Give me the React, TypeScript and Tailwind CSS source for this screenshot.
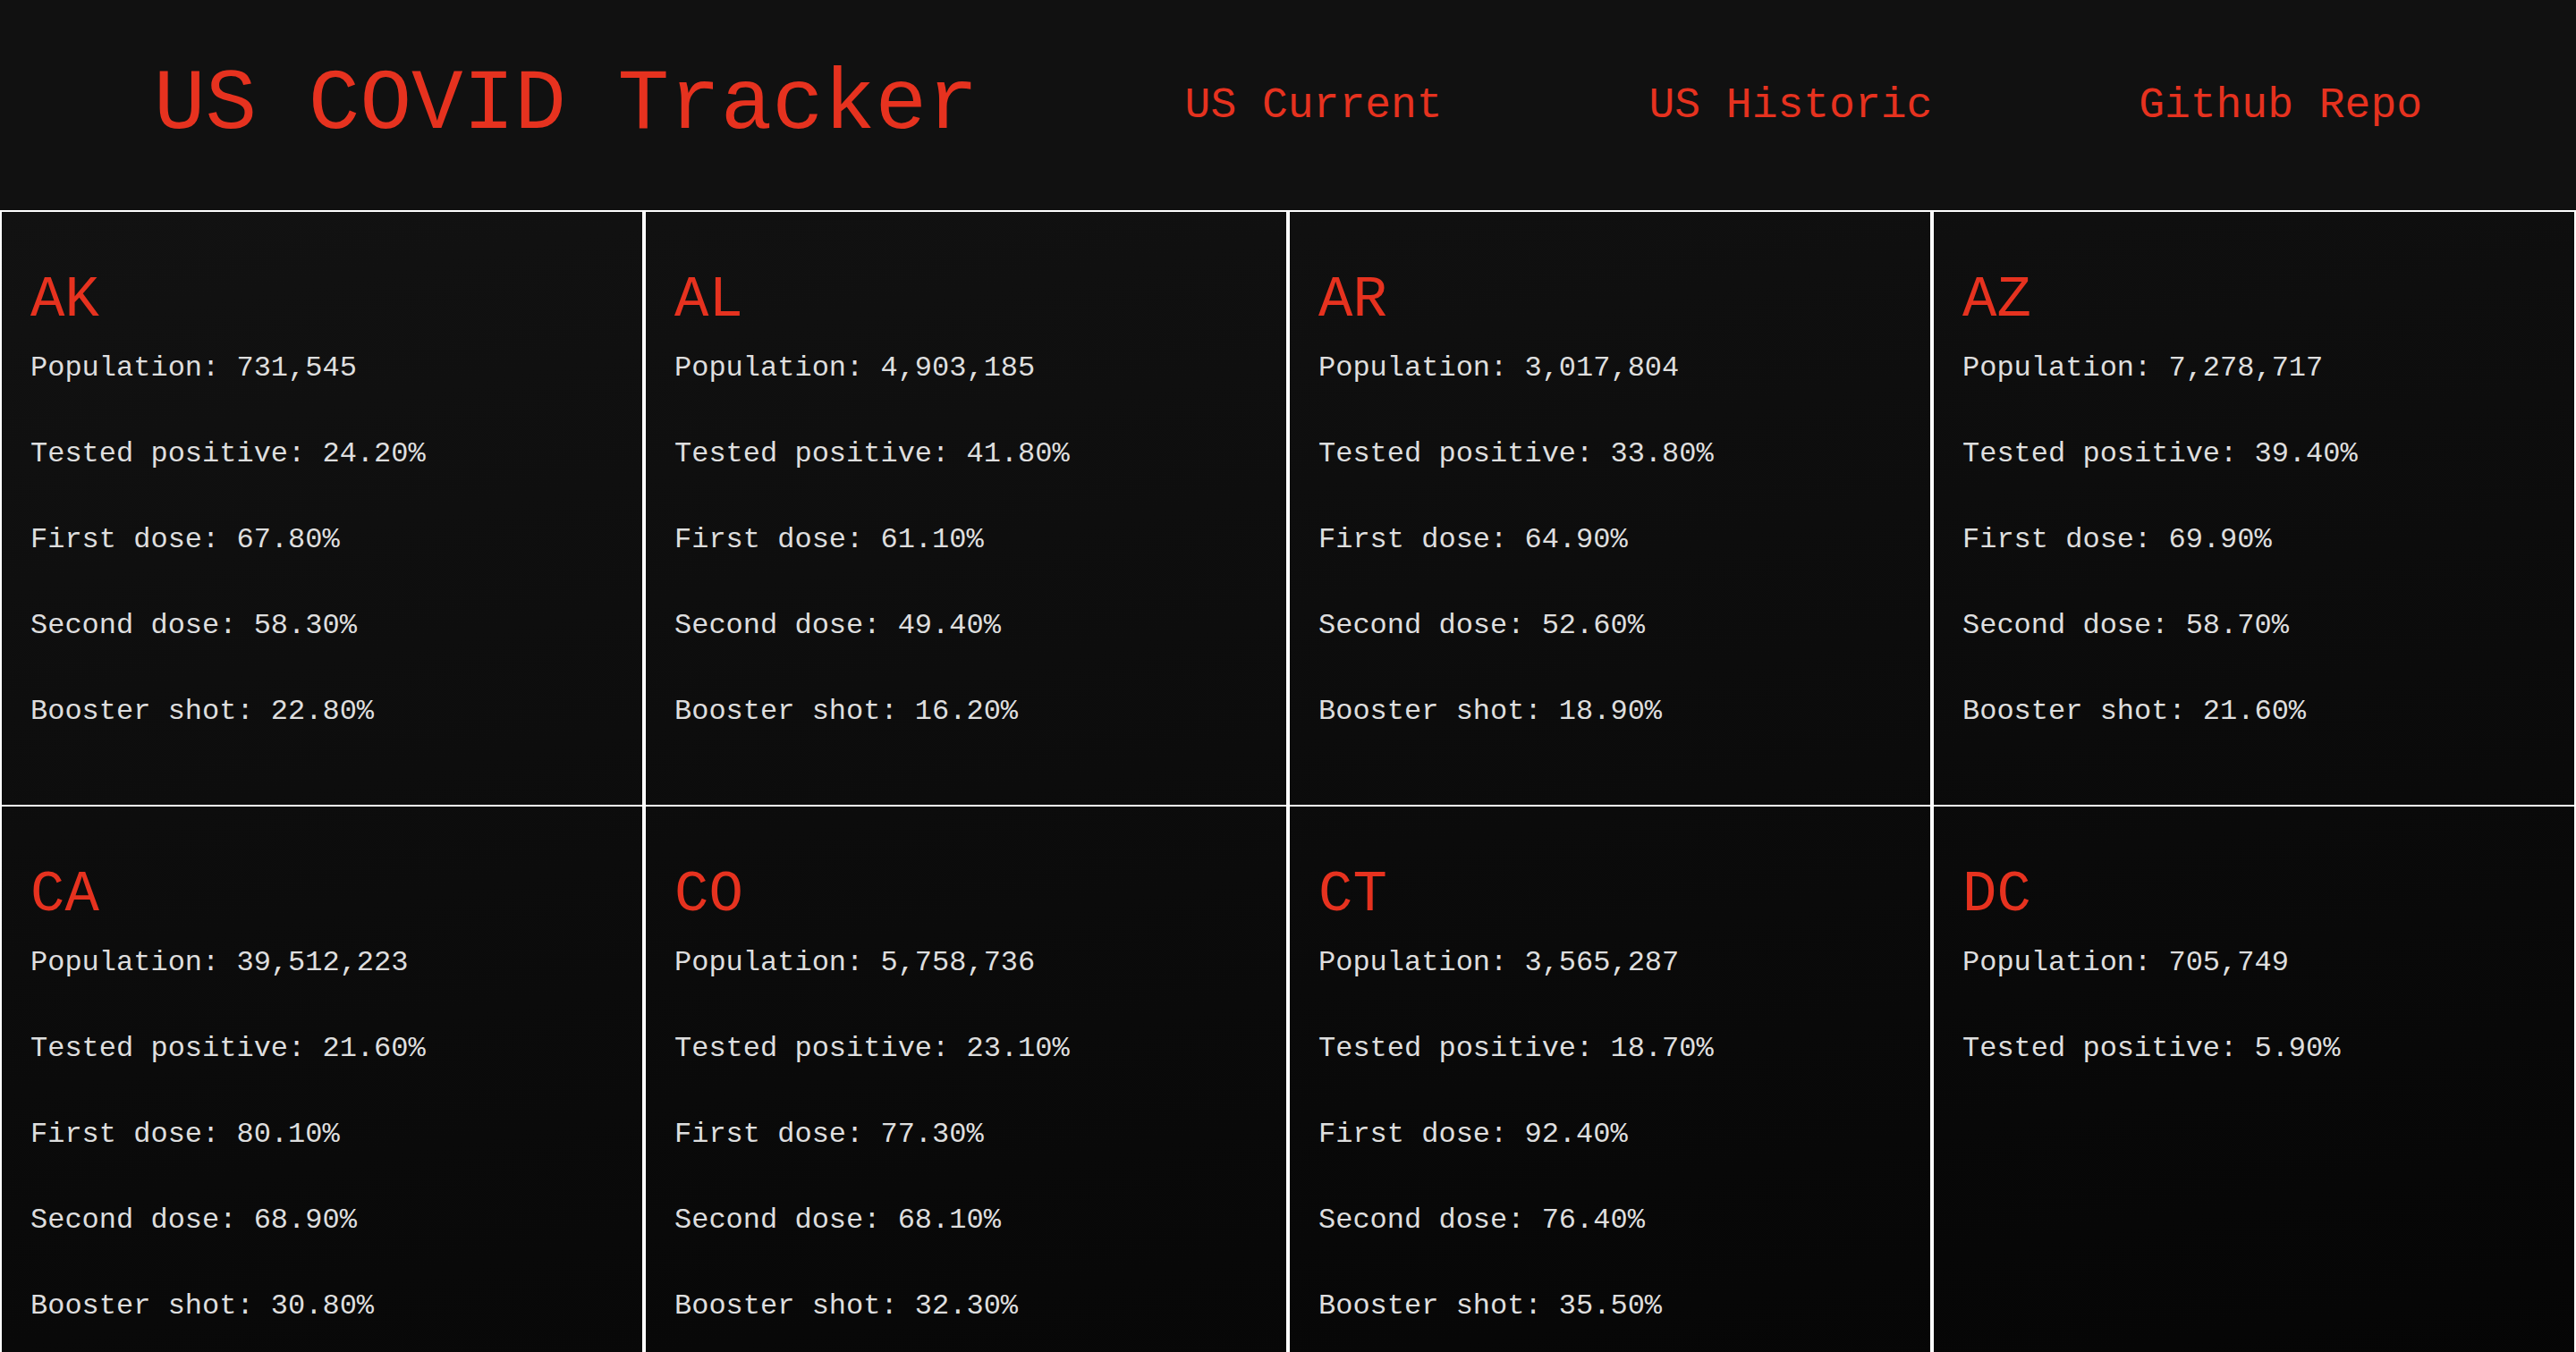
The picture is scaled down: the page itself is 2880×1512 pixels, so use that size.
import React from "react";

type StateRow = {
  code: string;
  population: string;
  positive: string;
  firstDose?: string;
  secondDose?: string;
  booster?: string;
};

const states: StateRow[] = [
  { code: "AK", population: "731,545", positive: "24.20%", firstDose: "67.80%", secondDose: "58.30%", booster: "22.80%" },
  { code: "AL", population: "4,903,185", positive: "41.80%", firstDose: "61.10%", secondDose: "49.40%", booster: "16.20%" },
  { code: "AR", population: "3,017,804", positive: "33.80%", firstDose: "64.90%", secondDose: "52.60%", booster: "18.90%" },
  { code: "AZ", population: "7,278,717", positive: "39.40%", firstDose: "69.90%", secondDose: "58.70%", booster: "21.60%" },
  { code: "CA", population: "39,512,223", positive: "21.60%", firstDose: "80.10%", secondDose: "68.90%", booster: "30.80%" },
  { code: "CO", population: "5,758,736", positive: "23.10%", firstDose: "77.30%", secondDose: "68.10%", booster: "32.30%" },
  { code: "CT", population: "3,565,287", positive: "18.70%", firstDose: "92.40%", secondDose: "76.40%", booster: "35.50%" },
  { code: "DC", population: "705,749", positive: "5.90%" },
];

const Stat: React.FC<{ label: string; value?: string }> = ({ label, value }) => {
  if (!value) return null;
  return (
    <div className="h-[96px] flex items-center text-[32px] leading-none text-[#dedede]">
      {label}: {value}
    </div>
  );
};

const StateCard: React.FC<{ s: StateRow }> = ({ s }) => {
  return (
    <div className="border-x-2 border-t-2 border-white pl-[32px] pt-[63px] pb-[56px]">
      <h2 className="h-[64px] pt-[8px] flex items-center text-[64px] leading-none text-[#e6321f]">{s.code}</h2>
      <Stat label="Population" value={s.population} />
      <Stat label="Tested positive" value={s.positive} />
      <Stat label="First dose" value={s.firstDose} />
      <Stat label="Second dose" value={s.secondDose} />
      <Stat label="Booster shot" value={s.booster} />
    </div>
  );
};

const App: React.FC = () => {
  return (
    <div className="min-h-screen w-full bg-[#111111] font-['Liberation_Mono',monospace]">
      <header className="h-[235px] flex items-center justify-between px-[172px]">
        <h1 className="text-[96px] leading-none text-[#e6321f]">US COVID Tracker</h1>
        <a href="#" className="text-[48px] leading-none text-[#e6321f]">US Current</a>
        <a href="#" className="text-[48px] leading-none text-[#e6321f]">US Historic</a>
        <a href="#" className="text-[48px] leading-none text-[#e6321f]">Github Repo</a>
      </header>

      <main className="grid grid-cols-4 bg-[linear-gradient(170deg,#121212_0%,#050505_100%)]">
        {states.map((s) => (
          <StateCard key={s.code} s={s} />
        ))}
      </main>
    </div>
  );
};

export default App;
